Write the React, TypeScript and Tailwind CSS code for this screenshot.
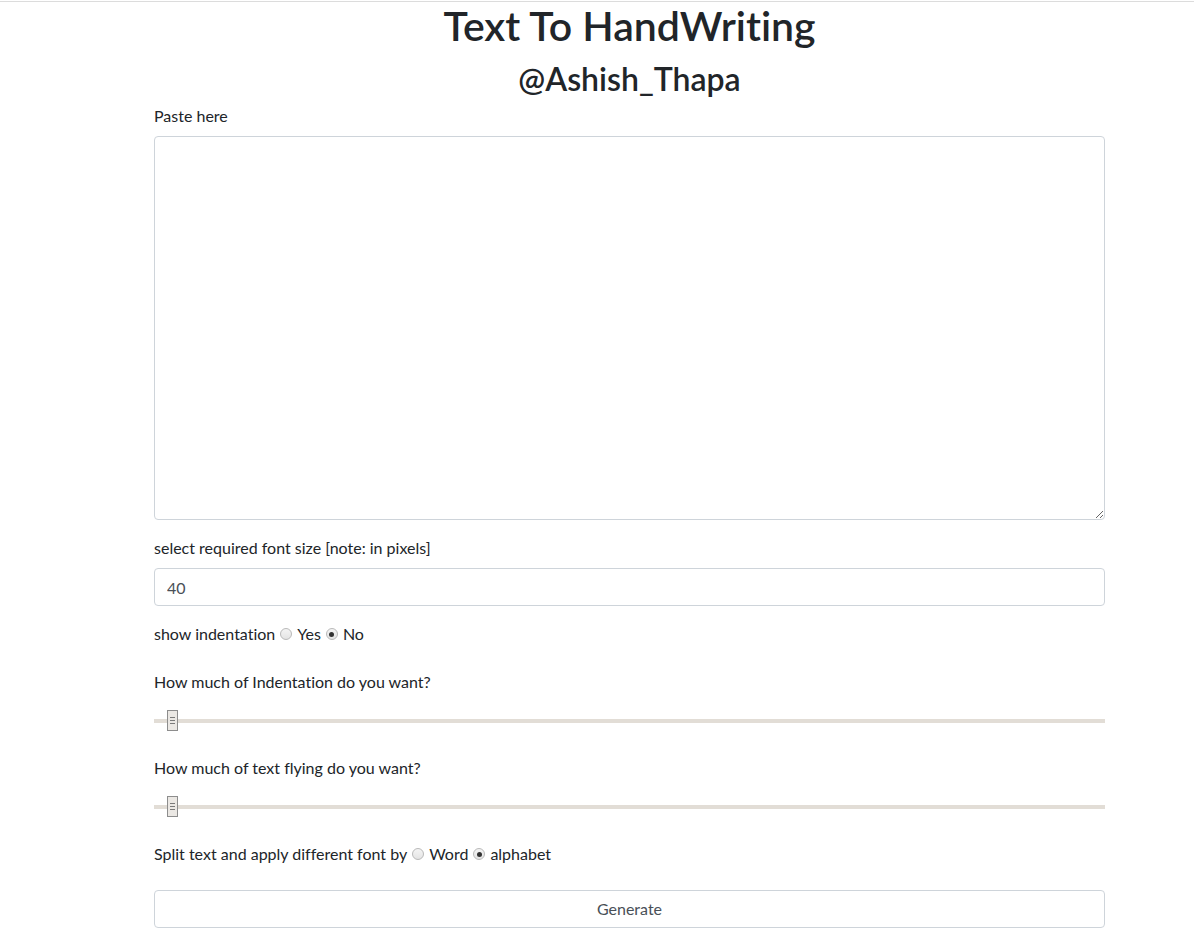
import { useState } from 'react';

function Radio({ checked, label, onClick }: { checked: boolean; label: string; onClick: () => void }) {
  return (
    <span className="inline-flex items-center cursor-pointer" onClick={onClick}>
      <span className="ml-[5px] mr-[5px] w-[12px] h-[12px] rounded-full border border-[#b9b9b9] bg-gradient-to-b from-[#f4f4f4] to-[#e4e4e4] flex items-center justify-center">
        {checked && <span className="w-[5px] h-[5px] rounded-full bg-[#333]" />}
      </span>
      <span>{label}</span>
    </span>
  );
}

function Slider({ value }: { value: number }) {
  return (
    <div className="relative h-[21px] w-full flex items-center">
      <div className="h-[4px] w-full bg-[#e2ddd6]" />
      <div
        className="absolute top-0 w-[11px] h-[21px] border border-[#8d8d8d] bg-[#ebe8e4] flex flex-col items-center justify-center gap-[2px]"
        style={{ left: `${13 + value}px` }}
      >
        <span className="block w-[5px] h-px bg-[#7a7a7a]" />
        <span className="block w-[5px] h-px bg-[#7a7a7a]" />
        <span className="block w-[5px] h-px bg-[#7a7a7a]" />
      </div>
    </div>
  );
}

export default function App() {
  const [text, setText] = useState('');
  const [size, setSize] = useState('40');
  const [indent, setIndent] = useState(false);
  const [byWord, setByWord] = useState(false);

  return (
    <div className="min-h-[939px] bg-white text-[#212529] text-[16px] leading-[24px] font-['Lato','Noto_Sans',sans-serif] [font-variant-ligatures:none]">
      <div className="h-px" />
      <div className="h-px bg-[#dcdcdc]" />
      <div className="w-[951px] ml-[154px]">
        <h1 className="text-center text-[41px] leading-[48px] font-semibold">Text To HandWriting</h1>
        <h3 className="text-center text-[32px] leading-[38px] font-semibold mt-[10px]">@Ashish_Thapa</h3>

        <label className="block mt-[6px] mb-[8px]">Paste here</label>
        <textarea
          value={text}
          onChange={(e) => setText(e.target.value)}
          className="block w-full h-[384px] border border-[#ced4da] rounded-[4px] px-3 py-1.5 text-[#495057] outline-none"
        />

        <label className="block mt-[16px] mb-[8px]">select required font size [note: in pixels]</label>
        <input
          value={size}
          onChange={(e) => setSize(e.target.value)}
          className="block w-full h-[38px] border border-[#ced4da] rounded-[4px] px-3 text-[#495057] outline-none"
        />

        <div className="mt-[16px] flex items-center">
          <span>show indentation</span>
          <Radio checked={indent} label="Yes" onClick={() => setIndent(true)} />
          <Radio checked={!indent} label="No" onClick={() => setIndent(false)} />
        </div>

        <label className="block mt-[24px] mb-[16px]">How much of Indentation do you want?</label>
        <Slider value={0} />

        <label className="block mt-[25px] mb-[16px]">How much of text flying do you want?</label>
        <Slider value={0} />

        <div className="mt-[25px] flex items-center">
          <span>Split text and apply different font by</span>
          <Radio checked={byWord} label="Word" onClick={() => setByWord(true)} />
          <Radio checked={!byWord} label="alphabet" onClick={() => setByWord(false)} />
        </div>

        <button className="block w-full h-[38px] mt-[24px] border border-[#ced4da] rounded-[4px] text-[#495057] bg-white">
          Generate
        </button>
      </div>
    </div>
  );
}
